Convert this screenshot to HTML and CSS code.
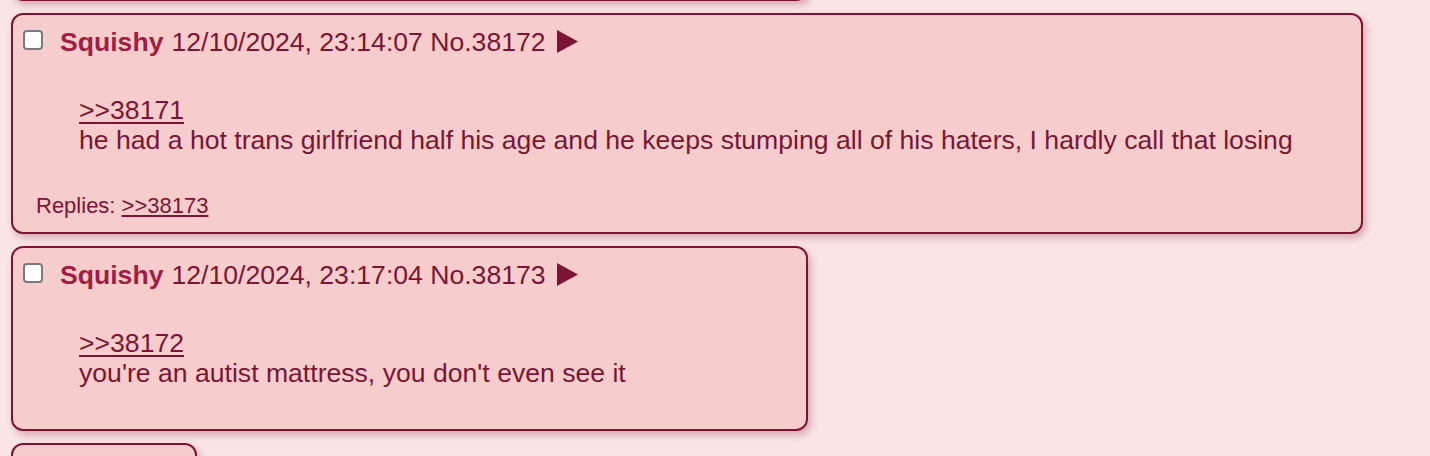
FILE: index.html
```html
<!DOCTYPE html>
<html lang="en">
<head>
<meta charset="utf-8">
<title>Thread</title>
<link rel="stylesheet" href="styles.css">
</head>
<body>
<div class="thread">
  <div class="post post-prev"></div>

  <div class="post">
    <div class="post-head">
      <input type="checkbox" class="check">
      <span class="name">Squishy</span>
      <span class="meta">12/10/2024, 23:14:07 No.38172</span>
      <svg class="arrow" width="21" height="23" viewBox="0 0 21 23"><path d="M0 0 L21 11.5 L0 23 Z"/></svg>
    </div>
    <blockquote class="msg">
      <a class="quotelink" href="#p38171">&gt;&gt;38171</a><br>
      he had a hot trans girlfriend half his age and he keeps stumping all of his haters, I hardly call that losing
    </blockquote>
    <div class="replies">Replies: <a class="quotelink" href="#p38173">&gt;&gt;38173</a></div>
  </div>

  <div class="post">
    <div class="post-head">
      <input type="checkbox" class="check">
      <span class="name">Squishy</span>
      <span class="meta">12/10/2024, 23:17:04 No.38173</span>
      <svg class="arrow" width="21" height="23" viewBox="0 0 21 23"><path d="M0 0 L21 11.5 L0 23 Z"/></svg>
    </div>
    <blockquote class="msg">
      <a class="quotelink" href="#p38172">&gt;&gt;38172</a><br>
      you're an autist mattress, you don't even see it
    </blockquote>
  </div>

  <div class="post post-next"></div>
</div>
</body>
</html>
```

FILE: styles.css
```css
html, body {
  margin: 0;
  padding: 0;
  background: #fae4e6;
  overflow: hidden;
}

body {
  font-family: "Liberation Sans", Arial, Helvetica, sans-serif;
  font-size: 26.6px;
  color: #7c1433;
}

.thread {
  display: flex;
  flex-direction: column;
  align-items: flex-start;
  gap: 12px;
  padding: 13px 0 0 11px;
}

.post {
  box-sizing: border-box;
  width: fit-content;
  min-width: 797px;
  max-width: 1353px;
  background: #f6cdcc;
  border: 2px solid #7d1434;
  border-radius: 12px;
  box-shadow: 3px 4px 7px rgba(125, 20, 52, 0.28);
  padding: 12px 10px 1px 10px;
}

.post-prev {
  width: 797px;
  height: 200px;
  margin-top: -212px;
}

.post-next {
  min-width: 0;
  width: 186px;
  height: 60px;
}

.post-head {
  display: flex;
  align-items: center;
  height: 30px;
  line-height: 30px;
  white-space: nowrap;
}

.check {
  appearance: none;
  -webkit-appearance: none;
  box-sizing: border-box;
  width: 20px;
  height: 20px;
  margin: -5px 17px 0 0;
  background: #ffffff;
  border: 2px solid #7b7b7b;
  border-radius: 4px;
  flex: none;
}

.name {
  font-weight: bold;
  color: #a31c41;
  margin-right: 8px;
}

.meta {
  color: #7c1433;
}

.arrow {
  flex: none;
  margin: -1px 0 0 11px;
  fill: #7c1433;
}

.msg {
  margin: 38px 58px 40px 56px;
  line-height: 30px;
}

.quotelink {
  color: #7c1433;
  text-decoration: underline;
  text-decoration-thickness: 2px;
  text-underline-offset: 3px;
}

.replies {
  font-size: 22px;
  line-height: 25px;
  margin: -2px 0 13px 13px;
}

.replies .quotelink {
  text-decoration-thickness: 1.5px;
  text-underline-offset: 2px;
}
```
